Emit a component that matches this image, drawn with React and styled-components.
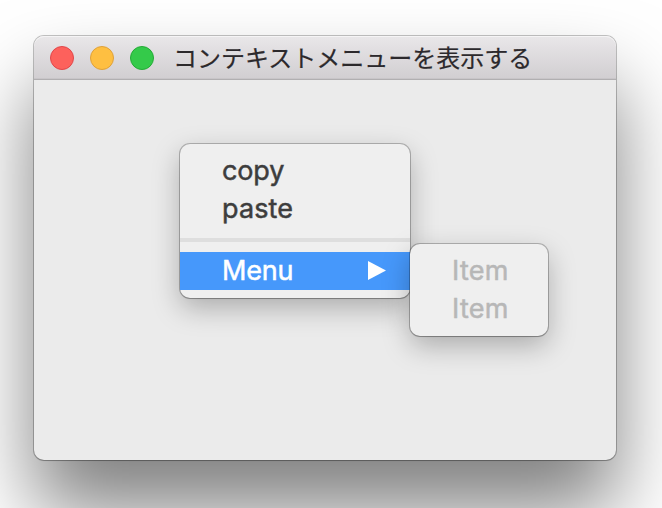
import React from "react";
import styled, { createGlobalStyle } from "styled-components";

const GlobalStyle = createGlobalStyle`
  *, *::before, *::after { box-sizing: border-box; }
  body { margin: 0; background: #fff; overflow: hidden; }
`;

const Desktop = styled.main`
  width: 662px;
  height: 508px;
  padding: 36px 46px 48px 34px;
  overflow: hidden;
  background: #fff;
`;

const Window = styled.section`
  position: relative;
  display: flex;
  flex-direction: column;
  width: 582px;
  height: 424px;
  border-radius: 10px;
  background: #ebebeb;
  box-shadow:
    0 0 0 1px rgba(0, 0, 0, 0.23),
    0 1px 1px rgba(0, 0, 0, 0.15),
    0 50px 80px rgba(0, 0, 0, 0.5);
`;

const TitleBar = styled.header`
  display: flex;
  align-items: center;
  height: 44px;
  padding: 0 16px;
  border-bottom: 1px solid #b1afb1;
  border-radius: 10px 10px 0 0;
  background: linear-gradient(#e9e7e9, #d1ced1);
  box-shadow: inset 0 1px 0 #f5f4f5, inset 0 -1px 0 #c8c5c8;
`;

const Controls = styled.div`
  display: flex;
  gap: 16px;
`;

const Control = styled.button`
  width: 24px;
  height: 24px;
  padding: 0;
  border: 1px solid ${(p) => p.$edge};
  border-radius: 50%;
  background: ${(p) => p.$fill};
`;

const Title = styled.h1`
  margin: 0 0 2px 19px;
  color: #2c292c;
  font: 400 24px/36px "Noto Sans CJK JP", sans-serif;
  -webkit-text-stroke: 0.2px currentColor;
  white-space: nowrap;
`;

const Menu = styled.div`
  position: absolute;
  left: ${(p) => p.$x}px;
  top: ${(p) => p.$y}px;
  width: ${(p) => p.$width}px;
  padding: 8px 0;
  border-radius: 10px;
  background: #efefef;
  box-shadow:
    0 0 0 1px rgba(0, 0, 0, 0.24),
    0 1px 1px rgba(0, 0, 0, 0.15),
    0 10px 28px rgba(0, 0, 0, 0.27);
`;

const MenuItem = styled.div`
  display: flex;
  align-items: center;
  justify-content: space-between;
  height: 38px;
  padding: 0 24px 0 42px;
  background: ${(p) => (p.$active ? "#4698fb" : "transparent")};
  color: ${(p) => (p.$active ? "#fff" : p.$disabled ? "#b7b7b7" : "#3d3d3d")};
  font: 400 27px/38px Inter, sans-serif;
  letter-spacing: ${(p) => p.$tracking || 0}px;
  -webkit-text-stroke: 0.5px currentColor;
  white-space: nowrap;
`;

const Separator = styled.hr`
  height: 4px;
  margin: 10px 0;
  border: 0;
  background: #dedede;
`;

const Arrow = styled.svg`
  display: block;
  width: 18px;
  height: 20px;
`;

export default function App() {
  return (
    <>
      <GlobalStyle />
      <Desktop>
        <Window>
          <TitleBar>
            <Controls>
              <Control aria-label="Close" $fill="#fd615c" $edge="#e1474a" />
              <Control aria-label="Minimize" $fill="#febf41" $edge="#dfa13a" />
              <Control aria-label="Zoom" $fill="#34ca4a" $edge="#24ab36" />
            </Controls>
            <Title>コンテキストメニューを表示する</Title>
          </TitleBar>
          <Menu $x={146} $y={108} $width={230}>
            <MenuItem $tracking={-0.15}>copy</MenuItem>
            <MenuItem $tracking={0.1}>paste</MenuItem>
            <Separator />
            <MenuItem $active $tracking={-0.2}>
              Menu
              <Arrow viewBox="0 0 18 20" aria-hidden="true">
                <path d="M0 0L18 9.5L0 19Z" fill="currentColor" />
              </Arrow>
            </MenuItem>
          </Menu>
          <Menu $x={376} $y={208} $width={138}>
            <MenuItem $disabled $tracking={0.3}>Item</MenuItem>
            <MenuItem $disabled $tracking={0.3}>Item</MenuItem>
          </Menu>
        </Window>
      </Desktop>
    </>
  );
}
